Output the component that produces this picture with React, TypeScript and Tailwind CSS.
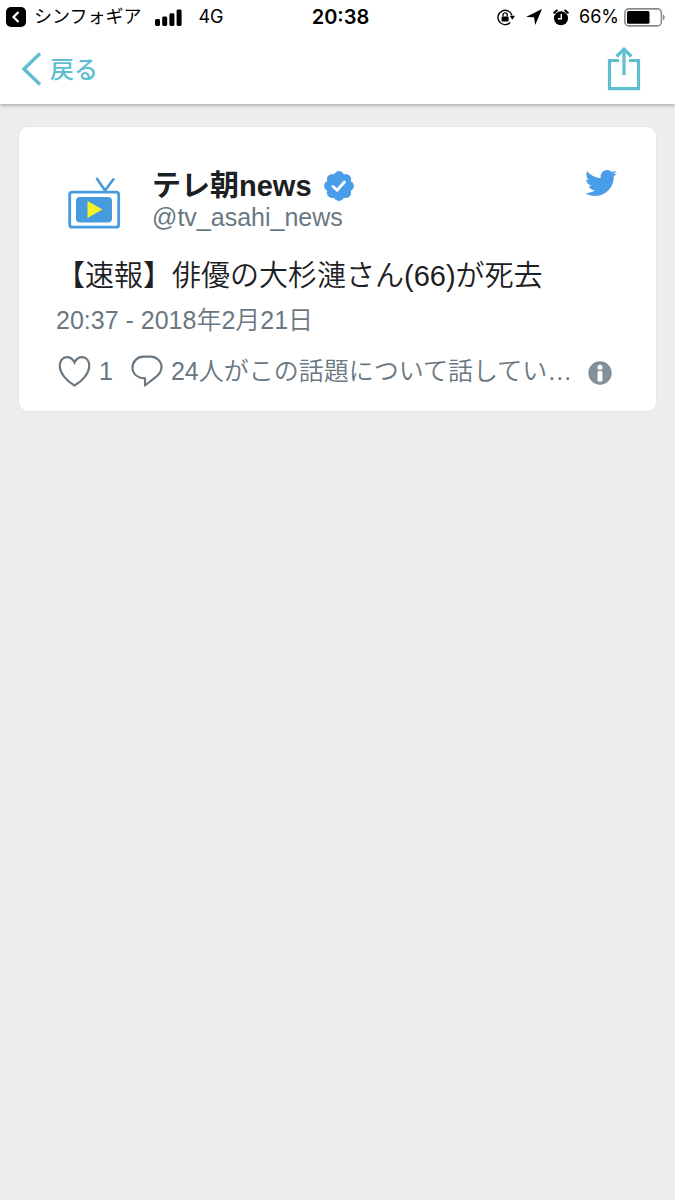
import React from 'react';
import { FaTwitter } from 'react-icons/fa';

interface Tweet {
  name: string;
  screenName: string;
  text: string;
  postedAt: string;
  likes: number;
  talking: string;
}

const tweet: Tweet = {
  name: 'テレ朝news',
  screenName: '@tv_asahi_news',
  text: '【速報】俳優の大杉漣さん(66)が死去',
  postedAt: '20:37 - 2018年2月21日',
  likes: 1,
  talking: '24人がこの話題について話してい…',
};

// 認証バッジの外周の丸
const BADGE_LOBES = [0, 45, 90, 135, 180, 225, 270, 315];

/**
 * 端末のステータスバー
 */
const StatusBar: React.FC = () => (
  <div className="grid h-[34px] grid-cols-[1fr_auto_1fr] items-center pl-[6px] font-['Inter','Noto_Sans_CJK_JP',sans-serif] text-[18px] leading-[24px] text-black">
    <div className="flex items-center">
      <button type="button" aria-label="前のアプリに戻る" className="mr-2">
        <svg width="20" height="20" viewBox="0 0 20 20">
          <rect width="20" height="20" rx="5" fill="#000" />
          <path d="M12.5 5 7.5 10l5 5" fill="none" stroke="#fff" strokeWidth="2.2" />
        </svg>
      </button>
      <span>シンフォギア</span>
      <svg width="27" height="17" viewBox="0 0 27 17" className="ml-[14px]">
        <rect x="0" y="10" width="5" height="7" rx="1.4" />
        <rect x="7.2" y="7.5" width="5" height="9.5" rx="1.4" />
        <rect x="14.4" y="4.3" width="5" height="12.7" rx="1.4" />
        <rect x="21.6" y="0.5" width="5" height="16.5" rx="1.4" />
      </svg>
      <span className="ml-4">4G</span>
    </div>
    <span className="text-[20px] font-semibold">20:38</span>
    <div className="flex items-center justify-end pr-[9px]">
      {/* 画面の向きロック */}
      <svg width="18" height="17" viewBox="0 0 18 17">
        <path d="M15 6.2A7.2 7.2 0 1 0 13.2 13.6" fill="none" stroke="#000" strokeWidth="1.4" />
        <path d="M12.8 6.8h5.2l-2.7 4z" />
        <rect x="4.6" y="7.4" width="7" height="5" rx="0.6" />
        <path d="M6 7.6V6a2.1 2.1 0 0 1 4.2 0v1.6" fill="none" stroke="#000" strokeWidth="1.3" />
      </svg>
      {/* 位置情報 */}
      <svg width="16" height="16" viewBox="0 0 16 16" className="ml-[11px]">
        <path d="M16 0 9.2 16 8 8.2 0 7.9z" />
      </svg>
      {/* アラーム */}
      <svg width="16" height="17" viewBox="0 0 16 17" className="ml-[11px]">
        <circle cx="8" cy="9.3" r="7" />
        <path d="M1.2 3.8 3.8 1.5M14.8 3.8 12.2 1.5" stroke="#000" strokeWidth="2" strokeLinecap="round" />
        <path d="M8.3 5v4.7H4.8" fill="none" stroke="#fff" strokeWidth="1.4" />
      </svg>
      <span className="ml-[10px]">66%</span>
      <svg width="42" height="19" viewBox="0 0 42 19" className="ml-[5px]">
        <rect x="0.9" y="0.9" width="36.5" height="17" rx="4" fill="none" stroke="#8a8a8a" strokeWidth="1.6" />
        <rect x="3" y="3" width="22.5" height="12.8" rx="1.5" />
        <path d="M39 6.5c2.2.8 2.2 5 0 5.8z" fill="#8a8a8a" />
      </svg>
    </div>
  </div>
);

/**
 * ナビゲーションバー
 */
const NavBar: React.FC = () => (
  <nav className="flex h-[70px] items-center justify-between pl-[21px] pr-[34px] text-[#5fbed2]">
    <button type="button" className="flex items-center gap-2">
      <svg width="21" height="34" viewBox="0 0 21 34">
        <path d="M19 1.5 3 17l16 15.5" fill="none" stroke="currentColor" strokeWidth="3.4" />
      </svg>
      <span className="pt-[2px] text-[24px] leading-[32px] font-medium">戻る</span>
    </button>
    <button type="button" aria-label="共有">
      <svg width="34" height="44" viewBox="0 0 34 44" fill="none" stroke="currentColor" strokeWidth="3.2">
        <path d="M12 13.5H2.5V41.7H31.5V13.5H22" />
        <path d="M17 28V3M9.500 9.5 17 2.2 24.5 9.5" />
      </svg>
    </button>
  </nav>
);

const TvLogo: React.FC = () => (
  <svg width="76" height="76" viewBox="0 0 76 76" className="shrink-0" fill="none" stroke="#459bdd">
    <path d="M40.5 13 49 25.5 58 13.5" strokeWidth="2.6" />
    <rect x="13.7" y="27.2" width="49" height="35" rx="2.5" strokeWidth="2.8" />
    <rect x="20" y="32" width="36" height="25.5" rx="4" fill="#459bdd" stroke="none" />
    <path d="M31.5 36v17L46.5 44.5z" fill="#f5f02c" stroke="none" />
  </svg>
);

const VerifiedBadge: React.FC = () => (
  <svg width="30" height="30" viewBox="-15 -15 30 30" role="img" aria-label="認証済み">
    <g fill="#4a9de9">
      <circle r="12" />
      {BADGE_LOBES.map((deg) => (
        <circle key={deg} cx="0" cy="-9.5" r="5.4" transform={`rotate(${deg})`} />
      ))}
    </g>
    <path d="M-6 0.5-2 4.3 5.5-4" fill="none" stroke="#fff" strokeWidth="2.8" strokeLinecap="round" strokeLinejoin="round" />
  </svg>
);

/**
 * ツイートカード
 */
const TweetCard: React.FC<{ tweet: Tweet }> = ({ tweet }) => (
  <article className="mx-[18px] mt-[22px] rounded-[10px] border border-[#e1e8ed] bg-white pl-[37px] pr-[39px] pt-[38px] pb-[24px] font-['Liberation_Sans','Noto_Sans_CJK_JP_DemiLight','Noto_Sans_CJK_JP',sans-serif] text-[25px] leading-[30px] font-[350] text-[#697882]">
    <header className="flex gap-5">
      <TvLogo />
      <div className="min-w-0 flex-1 pt-[5px]">
        <div className="flex items-center gap-3">
          <h1 className="font-['Liberation_Sans','Noto_Sans_CJK_JP',sans-serif] text-[29px] leading-[32px] font-bold text-[#1c2022]">{tweet.name}</h1>
          <VerifiedBadge />
        </div>
        <a href="#profile" className="block">{tweet.screenName}</a>
      </div>
      <a href="#twitter" aria-label="Twitter" className="h-8 pt-[2px] text-[#4a9de9]">
        <FaTwitter size={32} />
      </a>
    </header>
    <p className="mt-[15px] text-[29px] leading-[40px] text-[#1c2022]">{tweet.text}</p>
    <time className="mt-[9px] block">{tweet.postedAt}</time>
    <footer className="mt-[20px] flex items-center">
      <button type="button" className="ml-[2px] flex items-center gap-2">
        <svg width="33" height="32" viewBox="0 0 33 32" fill="none" stroke="currentColor" strokeWidth="2.2">
          <path d="M16.5 7.5C14.5 3.5 11.5 2.2 9 2.2 4.5 2.2 1.8 5.8 1.8 10.5c0 8 7 15.5 14.7 20 7.7-4.5 14.7-12 14.7-20 0-4.7-2.7-8.3-7.2-8.3-2.5 0-5.5 1.3-7.5 5.3z" />
        </svg>
        <span>{tweet.likes}</span>
      </button>
      <a href="#talking" className="ml-[18px] flex flex-1 items-center gap-2 whitespace-nowrap">
        <svg width="32" height="32" viewBox="0 0 32 32" className="shrink-0" fill="none" stroke="currentColor" strokeWidth="2.2" strokeLinejoin="round">
          <path d="M12.5 1.7h7c6.2 0 11 4.8 11 10.5 0 4.5-2.5 7.5-6.5 10.5l-10 7.8v-7.2C6.5 23 1.5 19 1.5 12.5 1.5 6.5 6.3 1.7 12.5 1.7z" />
        </svg>
        <span>{tweet.talking}</span>
      </a>
      <button type="button" aria-label="Twitter広告の情報とプライバシー" className="mr-[5px] pt-1">
        <svg width="24" height="24" viewBox="0 0 24 24">
          <circle cx="12" cy="12" r="11.700" fill="#84919b" />
          <circle cx="12" cy="6.3" r="2.5" fill="#fff" />
          <rect x="9.6" y="10" width="4.8" height="10.5" rx="1.2" fill="#fff" />
        </svg>
      </button>
    </footer>
  </article>
);

const App: React.FC = () => {
  return (
    <div className="min-h-screen bg-[#ededed] pb-8 font-['Liberation_Sans','Noto_Sans_CJK_JP',sans-serif]">
      <div className="bg-white shadow-[0_1px_4px_rgba(0,0,0,0.35)]">
        <StatusBar />
        <NavBar />
      </div>
      <main>
        <TweetCard tweet={tweet} />
      </main>
    </div>
  );
};

export default App;
